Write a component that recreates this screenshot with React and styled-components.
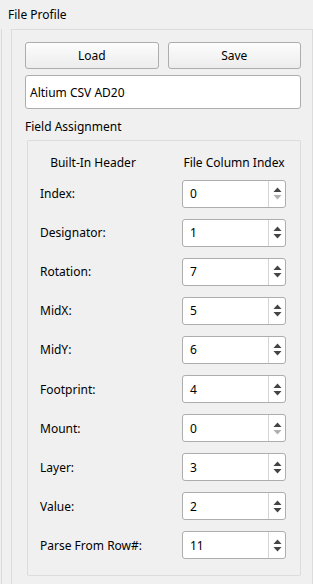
import React from 'react';
import styled, { createGlobalStyle } from 'styled-components';

const GlobalStyle = createGlobalStyle`
  html, body {
    margin: 0;
    padding: 0;
    background: #f0f0f0;
  }
  body {
    font-family: "Noto Sans", "Open Sans", sans-serif;
    font-size: 12px;
    color: #000;
  }
`;

const Page = styled.div`
  width: 313px;
  height: 584px;
  overflow: hidden;
  background: #f0f0f0;
`;

const Title = styled.div`
  height: 29px;
  padding-left: 8px;
  line-height: 30px;
  box-sizing: border-box;
`;

const Frame = styled.div`
  margin-left: 1px;
  border-left: 1px solid #dadada;
  height: 555px;
  padding-left: 9px;
`;

const Panel = styled.div`
  height: 100%;
  border: 1px solid #dcdcdc;
  border-bottom: none;
  padding: 12px 11px 0 13px;
  box-sizing: border-box;
  display: flex;
  flex-direction: column;
`;

const ButtonRow = styled.div`
  display: flex;
  gap: 9px;
`;

const Button = styled.button`
  flex: 1;
  height: 27px;
  border: 1px solid #adadad;
  border-radius: 3px;
  background: linear-gradient(#fdfdfd, #ececec);
  font: inherit;
  color: #000;
  padding: 0;
`;

const TextField = styled.div`
  margin-top: 6px;
  height: 34px;
  border: 1px solid #adadad;
  border-radius: 3px;
  background: #fff;
  padding-left: 4px;
  display: flex;
  align-items: center;
  box-sizing: border-box;
`;

const SectionLabel = styled.div`
  margin-top: 9px;
  height: 22px;
  line-height: 18px;
`;

const GroupBox = styled.div`
  margin-left: 2px;
  height: 436px;
  border: 1px solid #dcdcdc;
  border-radius: 2px;
  box-sizing: border-box;
  padding: 10px 14px 0 11px;
`;

const Row = styled.div`
  display: flex;
  align-items: center;
  justify-content: space-between;
  height: ${p => p.$h}px;
`;

const HeaderCell = styled.div`
  width: ${p => p.$w}px;
  text-align: center;
`;

const FieldLabel = styled.div`
  padding-left: 1px;
`;

const Spin = styled.div`
  width: 104px;
  height: 28px;
  border: 1px solid #adadad;
  border-radius: 3px;
  background: #fff;
  display: flex;
  box-sizing: border-box;
`;

const SpinValue = styled.div`
  flex: 1;
  padding-left: 7px;
  display: flex;
  align-items: center;
`;

const SpinButtons = styled.div`
  width: 16px;
  border-left: 1px solid #d4d4d4;
  display: flex;
  flex-direction: column;
  align-items: center;
  justify-content: center;
  gap: 3px;
`;

const Arrow = ({ up, disabled }) => (
  <svg width="9" height="5" viewBox="0 0 9 5">
    <path
      d={up ? 'M0.5 5 L4.5 0.5 L8.5 5 Z' : 'M0.5 0 L4.5 4.5 L8.5 0 Z'}
      fill={disabled ? '#b0b0b0' : '#444'}
    />
  </svg>
);

const fields = [
  ['Index:', 0],
  ['Designator:', 1],
  ['Rotation:', 7],
  ['MidX:', 5],
  ['MidY:', 6],
  ['Footprint:', 4],
  ['Mount:', 0],
  ['Layer:', 3],
  ['Value:', 2],
  ['Parse From Row#:', 11],
];

export default function App() {
  return (
    <Page>
      <GlobalStyle />
      <Title>File Profile</Title>
      <Frame>
        <Panel>
          <ButtonRow>
            <Button>Load</Button>
            <Button>Save</Button>
          </ButtonRow>
          <TextField>Altium CSV AD20</TextField>
          <SectionLabel>Field Assignment</SectionLabel>
          <GroupBox>
            <Row $h={23}>
              <HeaderCell $w={108}>Built-In Header</HeaderCell>
              <HeaderCell $w={104}>File Column Index</HeaderCell>
            </Row>
            {fields.map(([label, value]) => (
              <Row key={label} $h={39.1}>
                <FieldLabel>{label}</FieldLabel>
                <Spin>
                  <SpinValue>{value}</SpinValue>
                  <SpinButtons>
                    <Arrow up />
                    <Arrow disabled={value === 0} />
                  </SpinButtons>
                </Spin>
              </Row>
            ))}
          </GroupBox>
        </Panel>
      </Frame>
    </Page>
  );
}
